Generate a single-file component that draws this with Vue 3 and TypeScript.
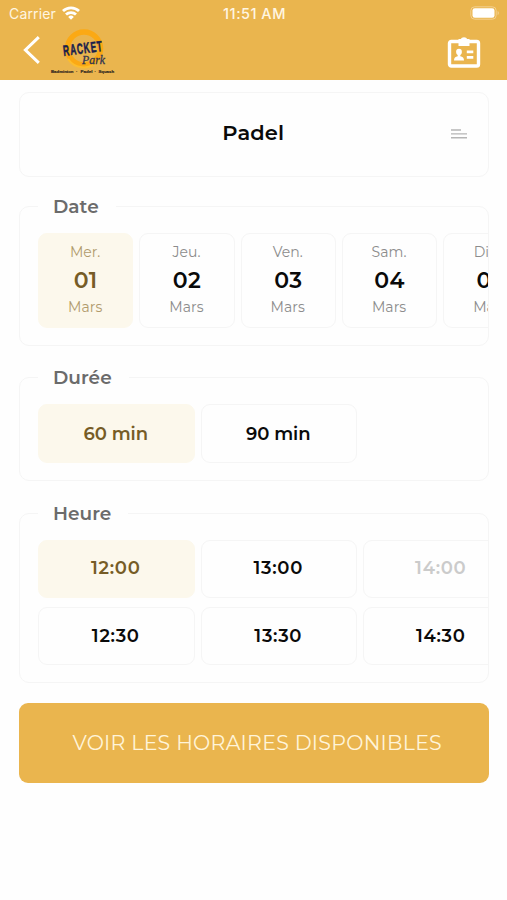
<script setup lang="ts">
import { ref } from 'vue'

interface Day {
  name: string
  num: string
  month: string
}
interface Slot {
  label: string
  disabled?: boolean
}

const days: Day[] = [
  { name: 'Mer.', num: '01', month: 'Mars' },
  { name: 'Jeu.', num: '02', month: 'Mars' },
  { name: 'Ven.', num: '03', month: 'Mars' },
  { name: 'Sam.', num: '04', month: 'Mars' },
  { name: 'Dim.', num: '05', month: 'Mars' },
]
const durations: string[] = ['60 min', '90 min']
const slots: Slot[] = [
  { label: '12:00' },
  { label: '13:00' },
  { label: '14:00', disabled: true },
  { label: '12:30' },
  { label: '13:30' },
  { label: '14:30' },
]

const day = ref('01')
const duration = ref('60 min')
const slot = ref('12:00')
</script>

<template>
  <div class="screen">
    <header class="top">
      <div class="status">
        <div class="carrier">
          <span>Carrier</span>
          <svg width="18" height="14" viewBox="0 0 18 14" fill="none" stroke="#fff" stroke-width="2.8">
            <path d="M1 5.100a11.500 11.500 0 0 1 16 0" />
            <path d="M4 8.600a7.200 7.200 0 0 1 10 0" />
            <path d="M9 13.800 6.200 10.900a4 4 0 0 1 5.600 0z" fill="#fff" stroke="none" />
          </svg>
        </div>
        <span class="clock">11:51 AM</span>
        <svg class="battery" width="30" height="14" viewBox="0 0 30 14">
          <rect x="0.800" y="0.800" width="25.400" height="12.400" rx="3.800" fill="none" stroke="#f3d08f" stroke-width="1" />
          <rect x="2.500" y="2.200" width="22" height="9.600" rx="2.300" fill="#fff" />
          <path d="M27.600 5v4.200c1.700-.6 1.700-3.600 0-4.200z" fill="#f3d08f" />
        </svg>
      </div>
      <div class="nav">
        <svg class="back" width="18" height="30" viewBox="0 0 18 30" fill="none" stroke="#fff" stroke-width="3">
          <path d="M15.800 2.200 2.400 15l13.400 12.800" />
        </svg>
        <svg class="logo" width="68" height="48" viewBox="0 0 68 48">
          <circle cx="35" cy="20.500" r="16.500" fill="none" stroke="#fba914" stroke-width="5.500" />
          <path d="M19 31a19 19 0 0 0 29 3" fill="none" stroke="#fdbd2c" stroke-width="2" />
          <g transform="rotate(-7 34 20)">
            <text x="14" y="25.500" class="logo-main" textLength="40" lengthAdjust="spacingAndGlyphs">RACKET</text>
          </g>
          <text x="33" y="36" class="logo-script" textLength="23" lengthAdjust="spacingAndGlyphs">Park</text>
          <text x="2" y="45" class="logo-small" textLength="22.500" lengthAdjust="spacingAndGlyphs">Badminton</text>
          <text x="27" y="45" class="logo-small">·</text>
          <text x="31.500" y="45" class="logo-small" textLength="12" lengthAdjust="spacingAndGlyphs">Padel</text>
          <text x="45.500" y="45" class="logo-small">·</text>
          <text x="49.500" y="45" class="logo-small" textLength="15.500" lengthAdjust="spacingAndGlyphs">Squash</text>
        </svg>
        <svg class="badge" width="34" height="32" viewBox="0 0 34 32">
          <rect x="2.500" y="4.500" width="29" height="24.500" rx="1.800" fill="none" stroke="#fff" stroke-width="3.400" />
          <path d="M11.500 2h2.300q.6-1.700 3.200-1.700t3.200 1.700h2.300v7h-11z" fill="#fff" />
          <ellipse cx="12" cy="14.900" rx="2.900" ry="3.100" fill="#fff" />
          <path d="M7 23.600c0-3 1.300-3.900 3.700-4.400v-2h2.600v2c2.400.5 3.700 1.400 3.700 4.400z" fill="#fff" />
          <path d="M19.800 14.900h6.500M19.800 20.400h6.500" stroke="#fff" stroke-width="2.900" />
        </svg>
      </div>
    </header>

    <main class="content">
      <div class="sport">
        <span class="sport-name">Padel</span>
        <svg class="lines" width="18" height="12" viewBox="0 0 18 12" stroke="#b5b5b5" stroke-width="1.400">
          <path d="M1 2h10M1 5.900h16M1 9.800h16" />
        </svg>
      </div>

      <fieldset class="group group-date">
        <legend>Date</legend>
        <div class="scroller">
          <button
            v-for="d in days"
            :key="d.num"
            type="button"
            class="tile day"
            :class="{ active: d.num === day }"
            @click="day = d.num"
          >
            <span class="minor">{{ d.name }}</span>
            <span class="num">{{ d.num }}</span>
            <span class="minor">{{ d.month }}</span>
          </button>
        </div>
      </fieldset>

      <fieldset class="group group-duration">
        <legend>Durée</legend>
        <div class="scroller">
          <button
            v-for="d in durations"
            :key="d"
            type="button"
            class="tile duration"
            :class="{ active: d === duration }"
            @click="duration = d"
          >
            {{ d }}
          </button>
        </div>
      </fieldset>

      <fieldset class="group group-hour">
        <legend>Heure</legend>
        <div class="scroller hours">
          <button
            v-for="s in slots"
            :key="s.label"
            type="button"
            class="tile hour"
            :class="{ active: s.label === slot }"
            :disabled="s.disabled"
            @click="slot = s.label"
          >
            {{ s.label }}
          </button>
        </div>
      </fieldset>

      <button type="button" class="submit"><span>VOIR LES HORAIRES DISPONIBLES</span></button>
    </main>
  </div>
</template>

<style>
body {
  background: #fefefe;
}
</style>

<style scoped>
.screen {
  width: 507px;
  height: 900px;
  overflow: hidden;
  background: #fefefe;
  font-family: Montserrat, Inter, 'Liberation Sans', sans-serif;
  color: #0a0a0a;
}
.screen * {
  box-sizing: border-box;
}
button {
  font-family: inherit;
  color: inherit;
  margin: 0;
}
.top {
  height: 79.5px;
  background: #eab54e;
}
.status {
  height: 27px;
  display: grid;
  grid-template-columns: 1fr auto 1fr;
  align-items: center;
  padding: 0 7px 0 9px;
  color: #fff6e2;
  font-family: Inter, sans-serif;
  font-size: 14px;
}
.carrier {
  display: flex;
  align-items: center;
  gap: 6px;
  letter-spacing: 0.15px;
}
.carrier svg {
  margin-top: -2px;
}
.clock {
  font-weight: 500;
  font-size: 14.500px;
  letter-spacing: 0.5px;
}
.battery {
  justify-self: end;
  margin-top: -1px;
}
.nav {
  height: 50px;
  display: flex;
  align-items: flex-start;
  padding: 0 26px 0 23px;
}
.back {
  margin-top: 8px;
}
.logo {
  margin: 1px auto 0 8px;
}
.badge {
  margin-top: 10px;
}
.logo-main {
  font: 700 15px 'Liberation Sans', sans-serif;
  letter-spacing: 1.5px;
  fill: #18204c;
  stroke: #18204c;
  stroke-width: 0.5px;
}
.logo-script {
  font: italic 400 13px 'Liberation Serif', serif;
  fill: #33364e;
  stroke: #33364e;
  stroke-width: 0.3px;
}
.logo-small {
  font: 700 4.200px 'Liberation Sans', sans-serif;
  fill: #33291f;
  stroke: #33291f;
  stroke-width: 0.2px;
}
.content {
  padding: 12px 18.500px 0 19px;
}
.sport {
  height: 85px;
  border: 1.500px solid #f5f5f5;
  border-radius: 10px;
  display: grid;
  grid-template-columns: 1fr auto 1fr;
  align-items: center;
  padding-right: 20px;
}
.sport-name {
  grid-column: 2;
  font-size: 21px;
  font-weight: 600;
  letter-spacing: 0.1px;
  padding: 0 0 4px 19px;
}
.lines {
  justify-self: end;
}
.group {
  margin: 0;
  min-width: 0;
  border: 1.500px solid #f5f5f5;
  border-radius: 10px;
  padding: 0 0 0 18px;
}
.group legend {
  height: 22px;
  line-height: 22px;
  padding: 0 17px 0 15px;
  font-size: 18.500px;
  font-weight: 600;
  letter-spacing: 0.05px;
  color: #6b6b6b;
}
.group-date {
  margin-top: 19px;
  height: 150px;
}
.group-duration {
  margin-top: 21px;
  height: 114px;
}
.group-hour {
  margin-top: 22px;
  height: 180px;
}
.scroller {
  display: flex;
  overflow: hidden;
  padding-top: 15px;
  gap: 6px;
}
.hours {
  display: grid;
  grid-template-columns: repeat(3, 156.500px);
  gap: 9.500px 6px;
}
.tile {
  flex: none;
  background: #fefefe;
  border: 1.500px solid #f5f5f5;
  border-radius: 9px;
  padding: 0;
}
.tile.active {
  background: #fcf8ec;
  border-color: #fcf8ec;
  color: #765c26;
}
.day {
  width: 95.300px;
  height: 95.500px;
  display: flex;
  flex-direction: column;
  align-items: center;
}
.minor {
  height: 20px;
  line-height: 20px;
  margin-top: 8px;
  font-size: 14px;
  letter-spacing: 0.05px;
  padding-right: 1px;
  color: #8c8c8c;
}
.active .minor {
  color: #b19b6c;
}
.num {
  height: 28px;
  line-height: 28px;
  margin-top: 5px;
  font-size: 22px;
  font-weight: 600;
  letter-spacing: 0.4px;
}
.num + .minor {
  margin-top: 2px;
}
.duration,
.hour {
  width: 156.500px;
  height: 59.500px;
  font-size: 18px;
  font-weight: 600;
  letter-spacing: -0.1px;
}
.duration {
  padding: 1px 1px 0 0;
}
.hour {
  height: 58px;
  padding: 0 1px 1px 0;
  letter-spacing: 0.7px;
}
.hour:disabled {
  color: #cbcbcb;
}
.submit {
  display: block;
  width: 100%;
  height: 80px;
  margin-top: 20px;
  border: 0;
  border-radius: 9px;
  background: #eab54e;
  color: #fff4d9;
  font-size: 20.500px;
  padding: 0 0 1px 7px;
  letter-spacing: 0.27px;
  white-space: nowrap;
}
</style>
